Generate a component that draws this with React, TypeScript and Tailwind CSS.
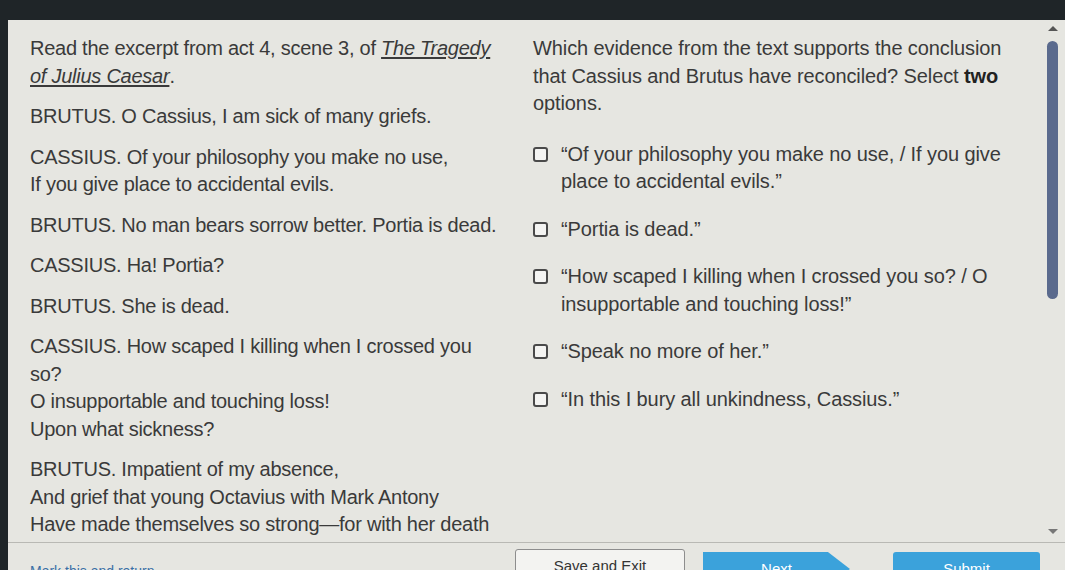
const passage: string[][] = [
  ["BRUTUS. O Cassius, I am sick of many griefs."],
  ["CASSIUS. Of your philosophy you make no use,", "If you give place to accidental evils."],
  ["BRUTUS. No man bears sorrow better. Portia is dead."],
  ["CASSIUS. Ha! Portia?"],
  ["BRUTUS. She is dead."],
  [
    "CASSIUS. How scaped I killing when I crossed you",
    "so?",
    "O insupportable and touching loss!",
    "Upon what sickness?",
  ],
  [
    "BRUTUS. Impatient of my absence,",
    "And grief that young Octavius with Mark Antony",
    "Have made themselves so strong\u2014for with her death",
  ],
];

const options: string[][] = [
  ["\u201COf your philosophy you make no use, / If you give", "place to accidental evils.\u201D"],
  ["\u201CPortia is dead.\u201D"],
  ["\u201CHow scaped I killing when I crossed you so? / O", "insupportable and touching loss!\u201D"],
  ["\u201CSpeak no more of her.\u201D"],
  ["\u201CIn this I bury all unkindness, Cassius.\u201D"],
];

function Checkbox() {
  return <span className="mt-[6px] block h-[15px] w-[15px] shrink-0 rounded-[3px] border-[2px] border-[#4a4a4a] bg-[#f4f4f2]" />;
}

export default function App() {
  return (
    <div
      className="h-[570px] w-[1065px] overflow-hidden bg-[#1f2528] pl-[8px] pt-[20px] text-[#3a3a3a]"
      style={{ fontFamily: '"Liberation Sans", Arial, sans-serif' }}
    >
      <div className="flex h-[550px] flex-col bg-[#e6e6e1]">
        <div className="flex h-[523px] shrink-0 border-b border-[#b9b9b4]">
          {/* passage */}
          <div className="w-[503px] whitespace-nowrap pl-[22px] pt-[15px] text-[20px] leading-[27.5px] tracking-[-0.25px]">
            <p>
              Read the excerpt from act 4, scene 3, of{" "}
              <span className="italic underline underline-offset-2">The Tragedy</span>
              <br />
              <span className="italic underline underline-offset-2">of Julius Caesar</span>.
            </p>
            {passage.map((lines, i) => (
              <p key={i} className="mt-[13px]">
                {lines.map((l, j) => (
                  <span key={j} className="block">
                    {l}
                  </span>
                ))}
              </p>
            ))}
          </div>

          {/* question */}
          <div className="w-[505px] whitespace-nowrap pl-[22px] pt-[15px] text-[20px] leading-[27.5px] tracking-[-0.1px]">
            <p>
              Which evidence from the text supports the conclusion
              <br />
              that Cassius and Brutus have reconciled? Select <b className="text-[#222]">two</b>
              <br />
              options.
            </p>
            <div className="mt-[23px] flex flex-col gap-[20px]">
              {options.map((lines, i) => (
                <label key={i} className="flex gap-[13px]">
                  <Checkbox />
                  <span>
                    {lines.map((l, j) => (
                      <span key={j} className="block">
                        {l}
                      </span>
                    ))}
                  </span>
                </label>
              ))}
            </div>
          </div>

          {/* scrollbar */}
          <div className="ml-auto flex w-[22px] flex-col items-center pr-[3px] pt-[6px]">
            <span className="h-0 w-0 border-x-[5px] border-b-[5px] border-x-transparent border-b-[#555]" />
            <span className="mt-[10px] h-[258px] w-[11px] rounded-full bg-[#5a6a8d]" />
            <span className="mt-auto mb-[8px] h-0 w-0 border-x-[5px] border-t-[5px] border-x-transparent border-t-[#777]" />
          </div>
        </div>

        {/* footer */}
        <div className="flex items-start pl-[22px] pt-[6px]">
          <a className="mt-[12px] w-[485px] text-[14px] text-[#3a6fa6]">Mark this and return</a>
          <button className="h-[34px] w-[170px] rounded-[3px] border border-[#8d8d8d] bg-[#f3f3f1] text-[15px] text-[#333]">
            Save and Exit
          </button>
          <button className="ml-[18px] mt-[3px] h-[34px] w-[147px] bg-[#3ba2db] text-[15px] text-white [clip-path:polygon(0_0,85%_0,100%_50%,85%_100%,0_100%)]">
            Next
          </button>
          <button className="ml-[43px] mt-[3px] h-[34px] w-[147px] rounded-[3px] bg-[#3ba2db] text-[15px] text-white">
            Submit
          </button>
        </div>
      </div>
    </div>
  );
}
